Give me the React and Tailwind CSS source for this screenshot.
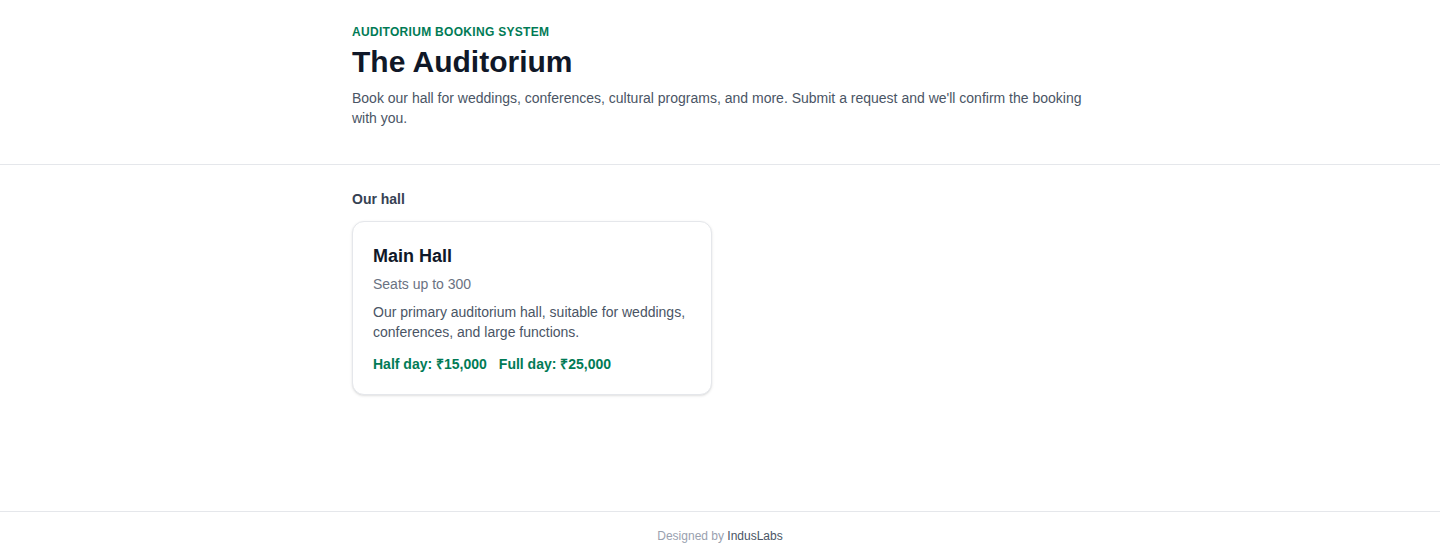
import React from 'react';

const halls = [
  {
    name: 'Main Hall',
    seats: 300,
    description: 'Our primary auditorium hall, suitable for weddings, conferences, and large functions.',
    halfDay: 15000,
    fullDay: 25000,
  },
];

export default function App() {
  return (
    <div className="min-h-screen flex flex-col bg-white font-['Liberation_Sans',Arial,sans-serif]">
      <header className="border-b border-gray-200">
        <div className="max-w-3xl mx-auto px-4 pt-6 pb-9">
          <p className="text-xs font-semibold uppercase tracking-wide text-emerald-700">Auditorium Booking System</p>
          <h1 className="mt-1 text-3xl font-bold text-gray-900">The Auditorium</h1>
          <p className="mt-2 text-sm text-gray-600">
            Book our hall for weddings, conferences, cultural programs, and more. Submit a request and we'll confirm the booking with you.
          </p>
        </div>
      </header>

      <main className="flex-1">
        <div className="max-w-3xl mx-auto px-4 pt-6">
          <h2 className="text-sm font-semibold text-gray-700">Our hall</h2>
          <div className="mt-3 grid grid-cols-2 gap-4">
            {halls.map((hall) => (
              <div key={hall.name} className="bg-white border border-gray-200 rounded-xl shadow-sm p-5">
                <h3 className="text-lg font-semibold text-gray-900">{hall.name}</h3>
                <p className="mt-1 text-sm text-gray-500">Seats up to {hall.seats}</p>
                <p className="mt-2 text-sm text-gray-600">{hall.description}</p>
                <div className="mt-3 flex gap-3 text-sm font-semibold text-emerald-700">
                  <span>Half day: ₹{hall.halfDay.toLocaleString('en-IN')}</span>
                  <span>Full day: ₹{hall.fullDay.toLocaleString('en-IN')}</span>
                </div>
              </div>
            ))}
          </div>
        </div>
      </main>

      <footer className="border-t border-gray-200 py-4 text-center text-xs text-gray-400">
        Designed by <span className="text-gray-600">IndusLabs</span>
      </footer>
    </div>
  );
}
